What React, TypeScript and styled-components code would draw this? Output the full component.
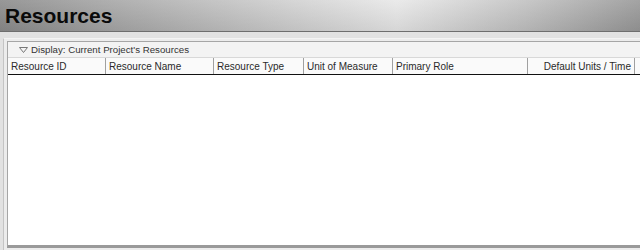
import React from "react";
import styled, { createGlobalStyle } from "styled-components";

const columns = [
  { label: "Resource ID", width: 98 },
  { label: "Resource Name", width: 108 },
  { label: "Resource Type", width: 90 },
  { label: "Unit of Measure", width: 89 },
  { label: "Primary Role", width: 135 },
  { label: "Default Units / Time", width: 107, right: true },
];

export default function App() {
  return (
    <>
      <GlobalStyle />
      <Page>
        <TitleBar>
          <Title>Resources</Title>
        </TitleBar>
        <Content>
          <Frame>
            <Panel>
              <DisplayRow>
                <Triangle width="9" height="6" viewBox="0 0 9 6">
                  <path d="M0.5 0.5 L8.5 0.5 L4.5 5.5 Z" fill="none" stroke="#777" strokeWidth="1" />
                </Triangle>
                Display: Current Project's Resources
              </DisplayRow>
              <HeaderRow>
                {columns.map((c) => (
                  <HeaderCell key={c.label} $width={c.width} $right={c.right}>
                    {c.label}
                  </HeaderCell>
                ))}
                <HeaderFill />
              </HeaderRow>
              <Body />
            </Panel>
          </Frame>
        </Content>
      </Page>
    </>
  );
}

const GlobalStyle = createGlobalStyle`
  html, body {
    margin: 0;
    padding: 0;
    background: #e4e4e4;
    font-family: "Liberation Sans", Arial, sans-serif;
  }
`;

const Page = styled.div`
  width: 640px;
  height: 250px;
  display: flex;
  flex-direction: column;
  overflow: hidden;
`;

const TitleBar = styled.div`
  height: 31px;
  flex: none;
  display: flex;
  align-items: center;
  padding-left: 5px;
  border-bottom: 1px solid #6e6e6e;
  background:
    linear-gradient(180deg, rgba(255, 255, 255, 0.1) 0%, rgba(0, 0, 0, 0.08) 100%),
    linear-gradient(90deg, #8c8c8c 0%, #a8a8a8 18%, #d0d0d0 45%, #e8e8e8 62%, #c2c2c2 82%, #999 100%);
`;

const Title = styled.h1`
  margin: 0;
  font-size: 21px;
  font-weight: bold;
  color: #0a0a0a;
`;

const Content = styled.div`
  flex: 1;
  display: flex;
  padding: 6px 0 0 3px;
  background: #e2e2e2;
`;

const Frame = styled.div`
  flex: 1;
  display: flex;
  padding: 2px 0 2px 3px;
  border-top: 1px solid #f4f4f4;
  border-left: 1px solid #c4c4c4;
  background: #ececec;
`;

const Panel = styled.div`
  flex: 1;
  display: flex;
  flex-direction: column;
  border: 1px solid #a6a6a6;
  border-right: none;
  border-bottom: 3px solid #9a9a9a;
  background: #fff;
`;

const DisplayRow = styled.div`
  height: 15px;
  display: flex;
  align-items: center;
  gap: 3px;
  padding-left: 11px;
  font-size: 9.7px;
  color: #333;
  background: #f3f3f3;
  border-bottom: 1px solid #d8d8d8;
`;

const Triangle = styled.svg`
  display: block;
`;

const HeaderRow = styled.div`
  height: 16px;
  display: flex;
  background: #fafafa;
  border-bottom: 1px solid #111;
`;

const HeaderCell = styled.div<{ $width: number; $right?: boolean }>`
  width: ${({ $width }) => $width}px;
  flex: none;
  box-sizing: border-box;
  display: flex;
  align-items: center;
  justify-content: ${({ $right }) => ($right ? "flex-end" : "flex-start")};
  padding: 0 3px;
  font-size: 10px;
  color: #2a2a2a;
  border-right: 1px solid #a0a0a0;
  white-space: nowrap;
`;

const HeaderFill = styled.div`
  flex: 1;
`;

const Body = styled.div`
  flex: 1;
  background: #fff;
`;
